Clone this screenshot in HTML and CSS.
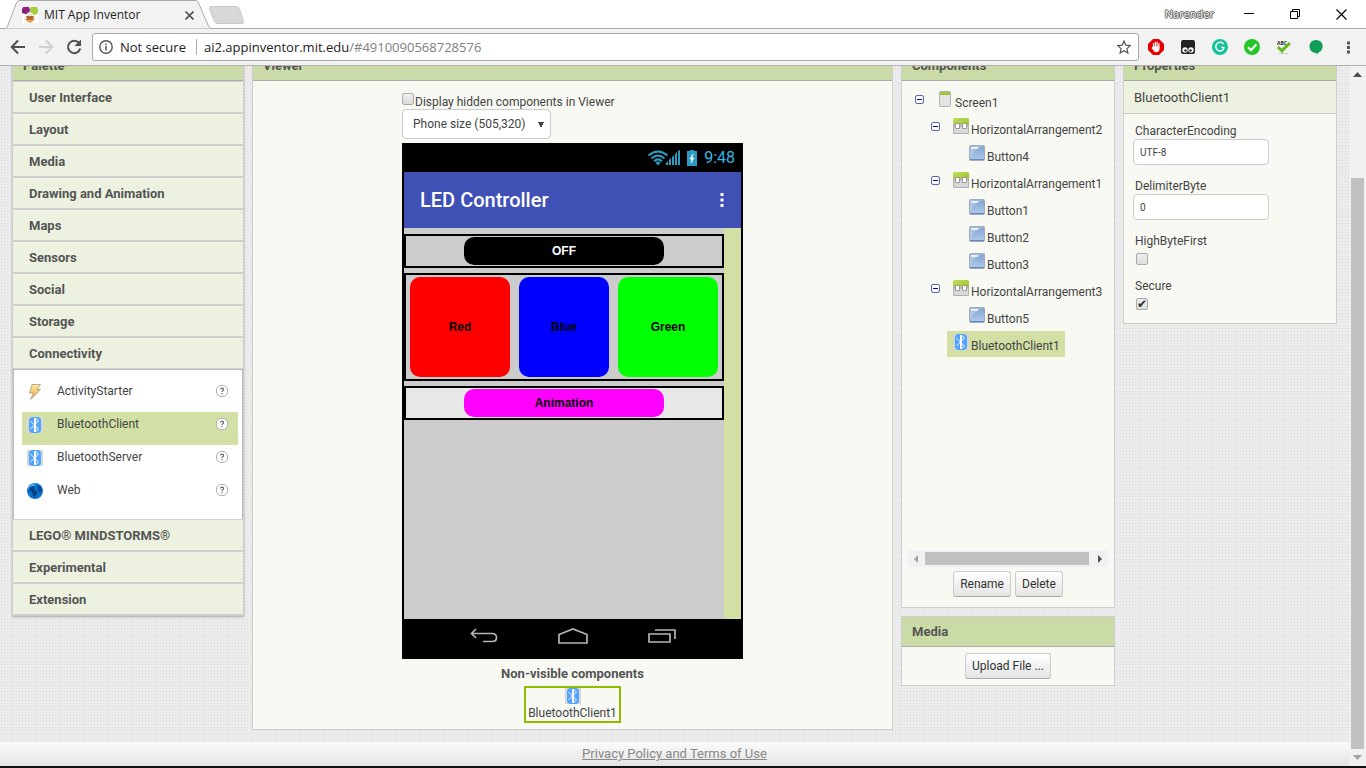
FILE: index.html
```html
<!DOCTYPE html>
<html lang="en">
<head>
  <meta charset="UTF-8">
  <title>MIT App Inventor</title>
  <link rel="stylesheet" href="styles.css">
</head>
<body>
  <!-- shared icons -->
  <svg class="defs" width="0" height="0">
    <defs>
      <linearGradient id="blue" x1="0" y1="0" x2="0" y2="1"><stop offset="0" stop-color="#7fa3d3"/><stop offset="1" stop-color="#b4cbe8"/></linearGradient>
      <linearGradient id="bolt" x1="0" y1="0" x2="0" y2="1"><stop offset="0" stop-color="#fdea9c"/><stop offset="1" stop-color="#f5a83c"/></linearGradient>
      <linearGradient id="leaf" x1="0" y1="0" x2="1" y2="1"><stop offset="0" stop-color="#bfe05a"/><stop offset="1" stop-color="#9cbf2c"/></linearGradient>
    </defs>
    <symbol id="i-bt" viewBox="0 0 16 16">
      <path fill="#d6d6d6" d="M0 0h16v16H0z"/>
      <rect x="2" width="12" height="16" rx="4" fill="#4da3ff"/>
      <path d="M7.500 1v14M8.500 1v14M3.500 4L11.500 12l-3 3M3.500 12L11.500 4l-3-3" fill="none" stroke="#fff" stroke-width="1"/>
    </symbol>
    <symbol id="i-button" viewBox="0 0 16 16">
      <rect x=".5" y=".5" width="15" height="15" rx="1" fill="url(#blue)" stroke="#a3abb8"/>
      <path d="M1 14h14v1H1z" fill="#5f88c0"/>
      <path d="M1 1h14C8 3 3 7 1 13z" fill="#fff" opacity=".25"/>
      <path d="M2 2h7v2H2z" fill="#fff" opacity=".75"/>
    </symbol>
    <symbol id="i-arr" viewBox="0 0 16 16">
      <path d="M1 0h14l1 1v6H0V1z" fill="url(#leaf)"/>
      <path d="M0 7h16v8l-1 1H1l-1-1z" fill="#d9d9d9"/>
      <path d="M.5 7v8.500h15V7" fill="none" stroke="#b0b0b0"/>
      <path d="M0 6h16v3H0z" fill="#b3b3b3" opacity=".7"/>
      <path d="M2.500 5.500h4v5h-4zM9.500 5.500h4v5h-4z" fill="#fff" stroke="#999"/>
    </symbol>
    <symbol id="i-screen" viewBox="0 0 16 16">
      <rect x="2.500" y=".5" width="11" height="15" rx="1" fill="#e3e3e3" stroke="#b0b0b0"/>
      <path d="M3 1h10v3H3z" fill="#a4c639"/>
    </symbol>
    <symbol id="i-help" viewBox="0 0 12 12">
      <rect x=".5" y=".5" width="11" height="11" rx="4.500" fill="#fff" stroke="#b0b0b0"/>
      <path d="M4.500 4.500c0-1.800 3.200-1.700 3.100 0C7.600 5.500 6 5.500 6 7" fill="none" stroke="#666" stroke-width="1.200"/>
      <path d="M5.400 8h1.200v1.200H5.400z" fill="#666"/>
    </symbol>
    <symbol id="i-minus" viewBox="0 0 9 9">
      <rect x=".5" y=".5" width="8" height="8" rx="1.500" fill="#fff" stroke="#5468b4"/>
      <path d="M2 4h5v1H2z" fill="#0000c8"/>
    </symbol>
  </svg>

  <header class="browser">
    <div class="tab-strip">
      <div class="tab">
        <svg class="tab-shape" width="208" height="29" viewBox="0 0 208 29"><path d="M0 28.500C2 28 2 27 3 25L11 4c1-3 2-3.500 4-3.500h175c2 0 3 .5 4 3.500l9 21c1 2 1 3 4 3.500" fill="#f2f2f2" stroke="#a9a9a9"/></svg>
        <svg class="favicon" width="16" height="16" viewBox="0 0 16 16"><path d="M0 0h16v16H0z" fill="#fff"/><path d="M1 0h6l1 3-1 4H3L0 6V2z" fill="#8e1f7d"/><path d="M9 0h6l1 2v4l-3 2-5-1V2z" fill="#a4cf3a"/><path d="M5 6l3-1 3 1v3H5z" fill="#e8e4dc"/><path d="M4 9h8l-1 4H5z" fill="#b06a35"/><path d="M2 11l3 1 3 2 3-2 3-1-3 3-3 2-3-2z" fill="#f58a2c"/></svg>
        <span class="tab-title">MIT App Inventor</span>
        <button class="plain" aria-label="Close tab"><svg width="9" height="9" viewBox="0 0 9 9"><path d="M.5.500l8 8M8.500.5l-8 8" stroke="#555" stroke-width="1.600"/></svg></button>
      </div>
      <button class="plain new-tab" aria-label="New tab"><svg width="35" height="18" viewBox="0 0 35 18"><path d="M2 .5h25c2 0 3 1 3.500 2.500l4 12c.5 2 0 2.500-1 2.500H8c-1 0-2-1-2.500-2L.5 3C0 1 .5.500 2 .5z" fill="#d8d8d8" stroke="#c8c8c8"/></svg></button>
      <span class="profile">Narender</span>
      <div class="window-buttons">
        <button class="plain" aria-label="Minimize"><svg width="11" height="11" viewBox="0 0 11 11"><path d="M0 4h10v1H0z"/></svg></button>
        <button class="plain" aria-label="Restore"><svg width="11" height="11" viewBox="0 0 11 11"><path d="M.5 2.500h7v7h-7zM2.500 2.500v-2h7v7h-2" fill="none" stroke="#000"/></svg></button>
        <button class="plain" aria-label="Close"><svg width="11" height="11" viewBox="0 0 11 11"><path d="M.5.500l10 10M10.500.5l-10 10" stroke="#000" stroke-width="1.200"/></svg></button>
      </div>
    </div>
    <div class="toolbar">
      <button class="plain" aria-label="Back"><svg width="16" height="16" viewBox="0 0 16 16"><path d="M15 8H2M8 1.500L1.700 8 8 14.500" fill="none" stroke="#505050" stroke-width="2"/></svg></button>
      <button class="plain" aria-label="Forward" disabled><svg width="16" height="16" viewBox="0 0 16 16"><path d="M1 8h13M8 1.500L14.300 8 8 14.500" fill="none" stroke="#d0d0d0" stroke-width="2"/></svg></button>
      <button class="plain" aria-label="Reload"><svg width="16" height="16" viewBox="0 0 16 16"><path d="M13 4A6.200 6.200 0 1 0 14.200 9.500" fill="none" stroke="#505050" stroke-width="2"/><path d="M15 .5V7H8.500z" fill="#505050"/></svg></button>
      <div class="omnibox">
        <svg width="14" height="14" viewBox="0 0 14 14"><circle cx="7" cy="7" r="6.200" fill="none" stroke="#555" stroke-width="1.400"/><path d="M6.300 6h1.500v4.500H6.300zM6.300 3.500h1.500V5H6.300z" fill="#555"/></svg>
        <span class="secure">Not secure</span>
        <span class="url">ai2.appinventor.mit.edu<span>/#4910090568728576</span></span>
        <svg width="14" height="14" viewBox="0 0 14 14"><path d="M7 1l1.800 4.200 4.400.4-3.300 3 1 4.400L7 10.700 3.100 13l1-4.400-3.300-3 4.400-.4z" fill="none" stroke="#555" stroke-width="1.200"/></svg>
      </div>
      <div class="extensions">
        <svg width="16" height="16" viewBox="0 0 16 16"><path d="M5 0h6l5 5v6l-5 5H5l-5-5V5z" fill="#e40000"/><path d="M5.500 8V4.500M7.300 8V3M9.100 8V3.300M10.900 8V4.500" stroke="#fff" stroke-width="1.200" stroke-linecap="round"/><path d="M4.900 7.500h6.600v2.500c0 3.500-4.500 4-5.500 2L3.500 9z" fill="#fff"/></svg>
        <svg width="16" height="16" viewBox="0 0 16 16"><rect x="1" y="1" width="14" height="14" rx="2" fill="#222"/><circle cx="5" cy="11" r="2.700" fill="#fff"/><circle cx="11" cy="11" r="2.700" fill="#fff"/><circle cx="5.500" cy="11.500" r="1.200" fill="#222"/><circle cx="10.500" cy="11.500" r="1.200" fill="#222"/></svg>
        <svg width="16" height="16" viewBox="0 0 16 16"><circle cx="8" cy="8" r="8" fill="#15c39a"/><path d="M11.500 5A4.300 4.300 0 1 0 12 9.500M12.500 8.500H9" fill="none" stroke="#fff" stroke-width="1.500"/></svg>
        <svg width="16" height="16" viewBox="0 0 16 16"><circle cx="8" cy="8" r="8" fill="#22c727"/><path d="M4 8.200l3 3 5.500-6" fill="none" stroke="#fff" stroke-width="2"/></svg>
        <svg width="16" height="16" viewBox="0 0 16 16"><text x="1" y="6" font-size="5" font-weight="700" fill="#222">ABC</text><path d="M2 8l4 4c2-3 5-5 8-8" fill="none" stroke="#62b91c" stroke-width="3"/><path d="M3 14.500h9" stroke="#ccc"/></svg>
        <svg width="16" height="16" viewBox="0 0 16 16"><path d="M8 1c8 0 8 9 4 11.500C10 14 9 15 8.500 16v-2C-1 14-.5 1 8 1z" fill="#109d58"/></svg>
        <svg width="16" height="16" viewBox="0 0 16 16"><path d="M7 2.500h3v3H7zM7 7h3v3H7zM7 11.500h3v3H7z" fill="#555"/></svg>
      </div>
    </div>
  </header>

  <div class="page">
    <div class="content">
      <main class="workspace">
        <section class="panel palette">
          <h2>Palette</h2>
          <button class="category">User Interface</button>
          <button class="category">Layout</button>
          <button class="category">Media</button>
          <button class="category">Drawing and Animation</button>
          <button class="category">Maps</button>
          <button class="category">Sensors</button>
          <button class="category">Social</button>
          <button class="category">Storage</button>
          <button class="category">Connectivity</button>
          <ul class="items">
            <li>
              <svg width="16" height="16" viewBox="0 0 16 16"><path d="M5 .5h8.500L10 5.500h3.500L3.500 15.500 6.500 9H2.500z" fill="url(#bolt)" stroke="#a89878" stroke-width=".8"/></svg>
              <span>ActivityStarter</span><svg width="12" height="12"><use href="#i-help"/></svg>
            </li>
            <li class="selected">
              <svg width="16" height="16"><use href="#i-bt"/></svg>
              <span>BluetoothClient</span><svg width="12" height="12"><use href="#i-help"/></svg>
            </li>
            <li>
              <svg width="16" height="16"><use href="#i-bt"/></svg>
              <span>BluetoothServer</span><svg width="12" height="12"><use href="#i-help"/></svg>
            </li>
            <li>
              <svg width="16" height="16" viewBox="0 0 16 16"><circle cx="8" cy="8" r="8" fill="#0a72cc"/><path d="M1 5c2-4 5-5 8-4.500L7 3 4 5 2 6z" fill="#3cb0f5"/><path d="M3 4l3-1 2 2-1 2 3 1v2l-2 4-2-1-1-4-3-2z" fill="#0a3f80"/><path d="M11 2l3 2 1 4-2 2-2-3-1-2z" fill="#0a4b94"/></svg>
              <span>Web</span><svg width="12" height="12"><use href="#i-help"/></svg>
            </li>
          </ul>
          <button class="category">LEGO® MINDSTORMS®</button>
          <button class="category">Experimental</button>
          <button class="category">Extension</button>
        </section>

        <section class="panel viewer">
          <h2>Viewer</h2>
          <div class="designer">
            <div class="hidden-toggle">
              <input type="checkbox" id="show-hidden"><label for="show-hidden">Display hidden components in Viewer</label>
            </div>
            <select class="size" aria-label="Screen size"><option>Phone size (505,320)</option></select>
            <div class="phone">
              <div class="status">
                <svg width="32" height="16" viewBox="0 0 32 16">
                  <g fill="none" stroke="#2d9cc4" stroke-width="2"><path d="M.5 5.500Q10 -2.500 19.500 5.500"/><path d="M3.500 8.500Q10 2.500 16.500 8.500"/><path d="M6 11.200Q10 7.500 14 11.200"/></g>
                  <path d="M7.500 12.500Q10 10.500 12.500 12.500L10 15.500z" fill="#2d9cc4"/>
                  <path d="M18 15v-2l2-2v4zM21 15v-5l2-2v7zM24 15V7l2-2v10zM27 15V4l2-2v13zM30 15V1l2-1v15z" fill="#2d9cc4"/>
                </svg>
                <svg width="10" height="16" viewBox="0 0 10 16"><path d="M3 0h4v1h3v15H0V1h3z" fill="#2d9cc4"/><path d="M6 4L3 9h2l-1 4 3-5H5z" fill="#fff" stroke="#fff" stroke-width=".6"/></svg>
                <span>9:48</span>
              </div>
              <div class="title-bar">
                <span>LED Controller</span>
                <svg width="4" height="16" viewBox="0 0 4 16"><path d="M.5 1h3v3h-3zM.5 6.500h3v3h-3zM.5 12h3v3h-3z" fill="#fff"/></svg>
              </div>
              <div class="screen">
                <div class="form">
                  <div class="arrangement"><button class="led off">OFF</button></div>
                  <div class="arrangement tall">
                    <button class="led red">Red</button>
                    <button class="led blue">Blue</button>
                    <button class="led green">Green</button>
                  </div>
                  <div class="arrangement light"><button class="led animation">Animation</button></div>
                </div>
              </div>
              <div class="nav">
                <svg width="28" height="16" viewBox="0 0 28 16"><path d="M6 1L1.500 5.500 6 10M2 5.500h20c6 0 6 8 0 8H13" fill="none" stroke="#b5b5b5" stroke-width="1.700"/></svg>
                <svg width="30" height="16" viewBox="0 0 30 16"><path d="M1 15V6.500L15 1l14 5.500V15z" fill="none" stroke="#b5b5b5" stroke-width="1.700"/></svg>
                <svg width="28" height="16" viewBox="0 0 28 16"><path d="M1 6h21v8H1zM7 2h20v9" fill="none" stroke="#b5b5b5" stroke-width="1.700"/></svg>
              </div>
            </div>
          </div>
          <div class="non-visible">
            <h3>Non-visible components</h3>
            <div class="nv-item"><svg width="16" height="16"><use href="#i-bt"/></svg><span>BluetoothClient1</span></div>
          </div>
        </section>

        <div class="column">
          <section class="panel">
            <h2>Components</h2>
            <div class="tree">
              <ul>
                <li>
                  <div class="node"><svg class="toggle" width="9" height="9"><use href="#i-minus"/></svg><span class="name"><svg width="16" height="16"><use href="#i-screen"/></svg><span>Screen1</span></span></div>
                  <ul>
                    <li>
                      <div class="node"><svg class="toggle" width="9" height="9"><use href="#i-minus"/></svg><span class="name"><svg width="16" height="16"><use href="#i-arr"/></svg><span>HorizontalArrangement2</span></span></div>
                      <ul>
                        <li class="node leaf"><span class="name"><svg width="16" height="16"><use href="#i-button"/></svg><span>Button4</span></span></li>
                      </ul>
                    </li>
                    <li>
                      <div class="node"><svg class="toggle" width="9" height="9"><use href="#i-minus"/></svg><span class="name"><svg width="16" height="16"><use href="#i-arr"/></svg><span>HorizontalArrangement1</span></span></div>
                      <ul>
                        <li class="node leaf"><span class="name"><svg width="16" height="16"><use href="#i-button"/></svg><span>Button1</span></span></li>
                        <li class="node leaf"><span class="name"><svg width="16" height="16"><use href="#i-button"/></svg><span>Button2</span></span></li>
                        <li class="node leaf"><span class="name"><svg width="16" height="16"><use href="#i-button"/></svg><span>Button3</span></span></li>
                      </ul>
                    </li>
                    <li>
                      <div class="node"><svg class="toggle" width="9" height="9"><use href="#i-minus"/></svg><span class="name"><svg width="16" height="16"><use href="#i-arr"/></svg><span>HorizontalArrangement3</span></span></div>
                      <ul>
                        <li class="node leaf"><span class="name"><svg width="16" height="16"><use href="#i-button"/></svg><span>Button5</span></span></li>
                      </ul>
                    </li>
                    <li class="node leaf"><span class="name selected"><svg width="16" height="16"><use href="#i-bt"/></svg><span>BluetoothClient1</span></span></li>
                  </ul>
                </li>
              </ul>
            </div>
            <div class="hscroll">
              <svg width="17" height="17" viewBox="0 0 17 17"><path d="M10 5v8L6 9z" fill="#a3a3a3"/></svg>
              <div class="hthumb"></div>
              <svg width="17" height="17" viewBox="0 0 17 17"><path d="M7 5v8l4-4z" fill="#505050"/></svg>
            </div>
            <div class="actions">
              <button class="btn">Rename</button>
              <button class="btn">Delete</button>
            </div>
          </section>
          <section class="panel">
            <h2>Media</h2>
            <div class="upload"><button class="btn">Upload File ...</button></div>
          </section>
        </div>

        <section class="panel properties">
          <h2>Properties</h2>
          <div class="component-name">BluetoothClient1</div>
          <form class="fields">
            <div class="field"><label for="encoding">CharacterEncoding</label><input type="text" id="encoding" value="UTF-8"></div>
            <div class="field"><label for="delimiter">DelimiterByte</label><input type="text" id="delimiter" value="0"></div>
            <div class="field"><label for="highbyte">HighByteFirst</label><input type="checkbox" id="highbyte"></div>
            <div class="field"><label for="secure">Secure</label><input type="checkbox" id="secure" checked></div>
          </form>
        </section>
      </main>
      <footer><a href="#">Privacy Policy and Terms of Use</a></footer>
    </div>
    <div class="vscroll">
      <svg width="17" height="17" viewBox="0 0 17 17"><path d="M4 11h9L8.500 6z" fill="#505050"/></svg>
      <div class="vthumb"></div>
      <svg width="17" height="17" viewBox="0 0 17 17"><path d="M4 6h9l-4.500 5z" fill="#a3a3a3"/></svg>
    </div>
  </div>
</body>
</html>
```
FILE: styles.css
```css
* {
  box-sizing: border-box;
}

body {
  margin: 0;
  height: 100vh;
  display: flex;
  flex-direction: column;
  overflow: hidden;
  border-bottom: 2px solid #111;
  font-family: Roboto, sans-serif;
  font-size: 12px;
  line-height: 16px;
  color: #444;
}

svg {
  display: block;
  flex: none;
}

.defs {
  position: absolute;
}

button, input, select {
  font-family: inherit;
  margin: 0;
}

ul {
  list-style: none;
  margin: 0;
  padding: 0;
}

/* browser window */
.browser {
  flex: none;
  font-family: "Open Sans", sans-serif;
  border-bottom: 1px solid #b0b0b0;
}

.plain {
  padding: 0;
  border: none;
  background: none;
}

.tab-strip {
  display: flex;
  align-items: center;
  height: 29px;
  background: #fff;
  border-bottom: 1px solid #a9a9a9;
}

.tab {
  position: relative;
  display: flex;
  align-items: center;
  width: 204px;
  height: 29px;
  margin-left: 5px;
  padding: 2px 15px 0 17px;
}

.tab-shape {
  position: absolute;
  left: 0;
  top: 0;
}

.tab .favicon, .tab button {
  position: relative;
}

.tab-title {
  position: relative;
  flex: 1;
  padding-left: 6px;
  color: #222;
}

.new-tab {
  padding-top: 2px;
}

.profile {
  margin-left: auto;
  margin-right: 30px;
  font-size: 11px;
  color: #fff;
  text-shadow: -1px 0 #555, 1px 0 #555, 0 -1px #555, 0 1px #555;
}

.window-buttons {
  display: flex;
  gap: 35px;
  padding-right: 19px;
}

.toolbar {
  display: flex;
  align-items: center;
  height: 36px;
  padding-left: 10px;
  gap: 12px;
  background: #f2f2f2;
}

.omnibox {
  flex: 1;
  display: flex;
  align-items: center;
  height: 28px;
  margin-left: -2px;
  padding: 0 7px 0 6px;
  font-size: 13px;
  color: #222;
  background: #fff;
  border: 1px solid #a9a9a9;
  border-radius: 3px;
}

.secure {
  margin-left: 7px;
  padding-right: 10px;
  border-right: 1px solid #aaa;
}

.url {
  flex: 1;
  padding-left: 7px;
}

.url span {
  color: #808080;
}

.extensions {
  display: flex;
  gap: 16px;
  margin-left: -3px;
  padding-right: 10px;
}

/* scrolled page */
.page {
  flex: 1;
  min-height: 0;
  display: flex;
}

.content {
  flex: 1;
  display: flex;
  flex-direction: column;
  overflow: hidden;
  background-color: #ececec;
  background-image: radial-gradient(#dcdcdc 1px, transparent 1px), radial-gradient(#e2e2e2 1px, transparent 1px);
  background-size: 3px 3px, 8px 7px;
}

.workspace {
  flex: 1;
  display: flex;
  align-items: flex-start;
  gap: 8px;
  margin-top: -16px;
  padding: 0 12px;
}

.panel {
  background: #f8f9f3;
  border: 1px solid #ccc;
}

.panel h2 {
  height: 30px;
  margin: 0;
  padding-left: 10px;
  font-size: 13px;
  font-weight: 700;
  line-height: 29px;
  color: #555;
  background: #cbdba7;
  border-bottom: 1px solid #aaa;
}

.palette {
  flex: none;
  width: 232px;
  box-shadow: 0 1px 2px #aaa;
}

.category {
  display: block;
  width: 100%;
  height: 32px;
  padding: 0 0 0 16px;
  font-size: 13px;
  font-weight: 700;
  text-align: left;
  color: #555;
  background: #edf2e0;
  border: solid #d0d0d0;
  border-width: 1px 0;
}

.items {
  padding: 9px 4px 8px 8px;
  background: #fff;
  border: 1px solid #bbb;
  border-bottom: none;
}

.items li {
  display: flex;
  height: 33px;
  padding: 5px 10px 0 5px;
}

.items li span {
  flex: 1;
  margin-top: -1px;
  padding-left: 14px;
}

.items li svg:last-child {
  margin-top: 1px;
}

.items .selected, .name.selected {
  background: #d2e0a6;
}

.viewer {
  flex: 1;
  display: flex;
  flex-direction: column;
}

.designer {
  align-self: center;
  padding-top: 12px;
}

.hidden-toggle {
  display: flex;
  align-items: flex-start;
  height: 16px;
}

.hidden-toggle label {
  padding: 1px 0 0 1px;
}

input[type=checkbox] {
  appearance: none;
  display: grid;
  place-items: center;
  width: 12px;
  height: 12px;
  background: linear-gradient(#eee, #ddd);
  border: 1px solid #aaa;
  border-radius: 2px;
}

input[type=checkbox]:checked::before {
  content: "✔";
  font: 12px/10px "DejaVu Sans", sans-serif;
  color: #333;
}

.size {
  display: block;
  appearance: none;
  width: 149px;
  height: 30px;
  padding: 0 10px;
  font-size: 12px;
  color: #444;
  border: 1px solid #ccc;
  border-radius: 4px;
  background: linear-gradient(to bottom left, #444 50%, transparent 50%) 135px 12px / 3px 6px no-repeat,
    linear-gradient(to bottom right, #444 50%, transparent 50%) 138px 12px / 3px 6px no-repeat #fff;
}

.phone {
  width: 341px;
  margin-top: 4px;
  background: #000;
  border: 2px solid #000;
}

.status {
  display: flex;
  align-items: center;
  justify-content: flex-end;
  height: 27px;
  gap: 7px;
  padding: 0 6px 2px 0;
  font-size: 16px;
  color: #33b5e5;
}

.title-bar {
  display: flex;
  align-items: center;
  justify-content: space-between;
  height: 56px;
  padding: 0 17px 0 16px;
  font-size: 20px;
  font-weight: 500;
  color: #fff;
  background: #3f51b5;
}

.screen {
  height: 391px;
  padding-right: 17px;
  background: #d2e0a6;
}

.form {
  display: flex;
  flex-direction: column;
  gap: 5px;
  height: 100%;
  padding-top: 6px;
  background: #ccc;
}

.arrangement {
  display: flex;
  justify-content: center;
  gap: 9px;
  padding: 1px;
  border: 2px solid #000;
}

.arrangement.tall {
  padding: 2px;
}

.arrangement.light {
  background: #e7e7e7;
}

.led {
  width: 200px;
  height: 28px;
  padding: 0;
  font-family: "Liberation Sans", Arial, sans-serif;
  font-size: 12px;
  font-weight: 700;
  color: #000;
  border: none;
  border-radius: 10px;
}

.tall .led {
  width: 100px;
  height: 100px;
}

.tall .blue {
  width: 90px;
  background: #00f;
}

.off {
  color: #fff;
  background: #000;
}

.red {
  background: #f00;
}

.green {
  background: #0f0;
}

.animation {
  background: #f0f;
}

.nav {
  display: flex;
  align-items: center;
  justify-content: center;
  gap: 60px;
  height: 38px;
  padding-bottom: 4px;
}

.non-visible {
  display: flex;
  flex-direction: column;
  align-items: center;
  padding: 7px 0 6px;
}

.non-visible h3 {
  margin: 0 0 4px;
  font-size: 13px;
  font-weight: 700;
  color: #555;
}

.nv-item {
  display: flex;
  flex-direction: column;
  align-items: center;
  padding: 0 2px;
  border: 2px solid #8fbe00;
}

.nv-item span {
  padding-top: 1px;
}

.column {
  flex: none;
  width: 214px;
  display: flex;
  flex-direction: column;
  gap: 8px;
}

.tree {
  height: 469px;
  padding: 7px 0 0 13px;
  overflow: hidden;
}

.tree ul ul {
  padding-left: 16px;
}

.node {
  display: flex;
  height: 27px;
}

.toggle {
  margin: 7px 7px 0 0;
}

.leaf {
  padding-left: 16px;
}

.name {
  display: flex;
  gap: 2px;
  height: 26px;
  padding: 3px 5px 0 6px;
}

.name span {
  padding-top: 4px;
}

.hscroll {
  display: flex;
  margin: 0 6px;
  background: #f1f1f1;
}

.hthumb {
  flex: 1;
  margin: 2px 2px 2px 0;
  background: #c1c1c1;
}

.actions, .upload {
  display: flex;
  justify-content: center;
  gap: 4px;
  padding: 4px 0 10px;
}

.upload {
  padding: 6px 0;
}

.btn {
  height: 26px;
  padding: 0 6px;
  font-size: 12px;
  color: #333;
  background: linear-gradient(#fff, #e4e4e4);
  border: 1px solid #ccc;
  border-bottom-color: #aaa;
  border-radius: 3px;
}

.properties {
  flex: none;
  width: 214px;
}

.component-name {
  height: 33px;
  padding-left: 10px;
  font-size: 13px;
  line-height: 33px;
  background: #edf2e0;
  border-bottom: 1px solid #ccc;
}

.fields {
  display: flex;
  flex-direction: column;
  gap: 13px;
  padding: 9px 9px 13px;
}

.field label {
  display: block;
  padding-left: 2px;
}

.field input[type=text] {
  display: block;
  width: 136px;
  height: 26px;
  padding: 0 6px;
  font-size: 10px;
  color: #444;
  background: #fff;
  border: 1px solid #ccc;
  border-radius: 4px;
}

.field input[type=checkbox] {
  margin: 4px 0 0 3px;
}

footer {
  flex: none;
  height: 24px;
  font-size: 13px;
  line-height: 24px;
  text-align: center;
  background: linear-gradient(#fbfbfb, #e3e3e3);
}

footer a {
  color: #888;
}

.vscroll {
  flex: none;
  width: 17px;
  display: flex;
  flex-direction: column;
  background: #f1f1f1;
}

.vthumb {
  flex: 1;
  margin: 95px 2px 0;
  background: #c1c1c1;
}
```
